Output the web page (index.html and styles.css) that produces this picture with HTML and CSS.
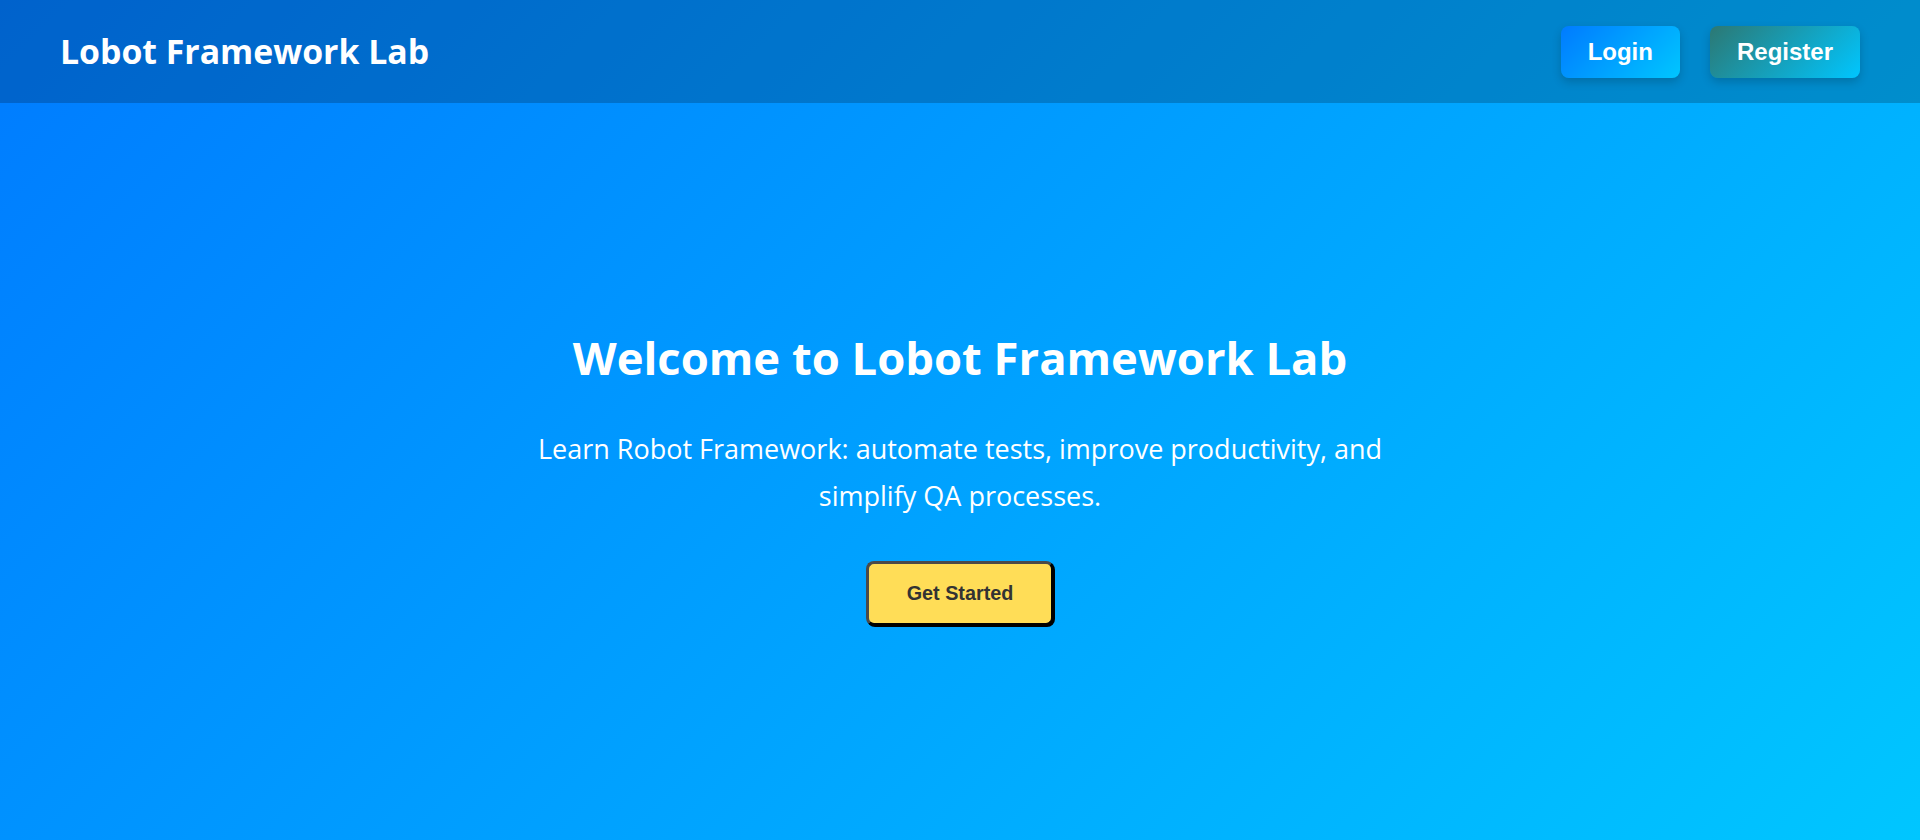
FILE: index.html
```html
<!DOCTYPE html>
<html lang="en">
<head>
<meta charset="utf-8">
<title>Lobot Framework Lab</title>
<link rel="stylesheet" href="styles.css">
</head>
<body>
  <header class="topbar">
    <div class="brand">Lobot Framework Lab</div>
    <nav class="actions">
      <a class="btn btn-login" href="#">Login</a>
      <a class="btn btn-register" href="#">Register</a>
    </nav>
  </header>
  <main class="hero">
    <h1 class="hero-title">Welcome to Lobot Framework Lab</h1>
    <p class="hero-text">Learn Robot Framework: automate tests, improve productivity, and simplify QA processes.</p>
    <button class="cta" type="button">Get Started</button>
  </main>
</body>
</html>
```
FILE: styles.css
```css
* { box-sizing: border-box; }

html, body { height: 100%; }

body {
  margin: 0;
  display: flex;
  flex-direction: column;
  min-height: 100vh;
  background: linear-gradient(135deg, #007bff, #00c6ff);
  font-family: "Open Sans", "Noto Sans", sans-serif;
  color: #fff;
}

.topbar {
  height: 103px;
  flex: 0 0 auto;
  display: flex;
  align-items: center;
  justify-content: space-between;
  padding: 0 60px;
  background: rgba(0, 0, 0, 0.2);
}

.brand {
  font-size: 33.8px;
  font-weight: 700;
  line-height: 1;
}

.actions {
  display: flex;
  gap: 30px;
}

.btn {
  display: block;
  font-family: "Liberation Sans", Arial, sans-serif;
  font-weight: 700;
  font-size: 24px;
  line-height: 28px;
  padding: 12px 27px;
  color: #fff;
  text-decoration: none;
  border-radius: 8px;
  box-shadow: 0 4px 10px rgba(0, 0, 0, 0.18);
}

.btn-login {
  background: linear-gradient(135deg, #007bff, #00c6ff);
}

.btn-register {
  background: linear-gradient(135deg, #2c7873, #00c6ff);
}

.hero {
  flex: 1 1 auto;
  display: flex;
  flex-direction: column;
  align-items: center;
  justify-content: center;
  padding-top: 12px;
  text-align: center;
}

.hero-title {
  margin: 0;
  font-size: 45.4px;
  line-height: 56px;
  font-weight: 700;
}

.hero-text {
  margin: 40px 0 0;
  max-width: 900px;
  font-size: 27px;
  line-height: 47px;
}

.cta {
  margin-top: 42px;
  font-family: "Liberation Sans", Arial, sans-serif;
  font-weight: 700;
  font-size: 19.8px;
  line-height: 23px;
  padding: 18px 37.5px;
  color: #333;
  background: #ffdd57;
  border: 3px solid;
  border-color: #4a4a4a #000 #000 #4a4a4a;
  border-radius: 8px;
  box-shadow: 1px 1px 0 #000;
  cursor: pointer;
}
```
